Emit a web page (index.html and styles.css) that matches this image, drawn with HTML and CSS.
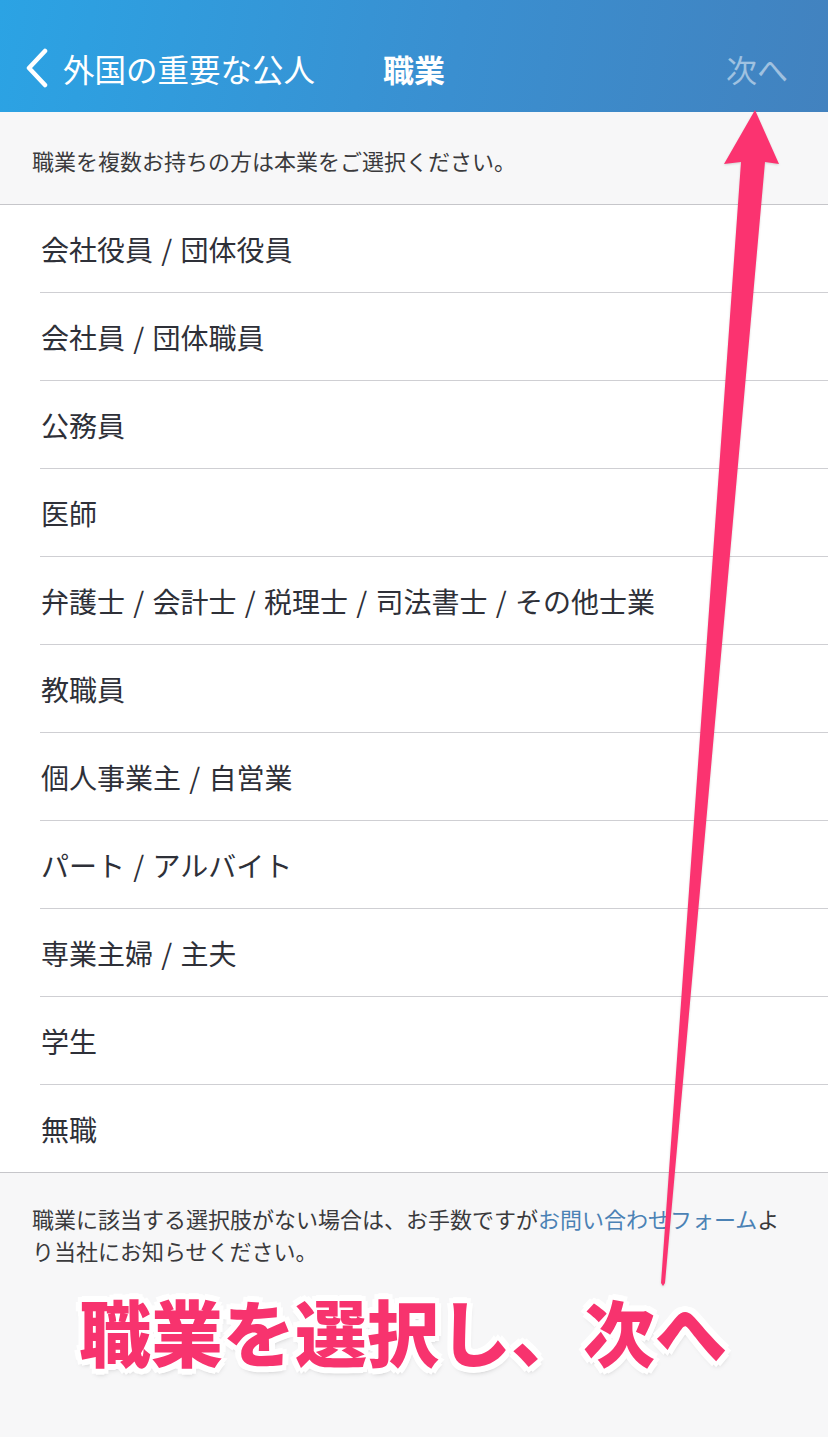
FILE: index.html
```html
<!DOCTYPE html>
<html lang="ja">
<head>
    <meta charset="UTF-8">
    <meta name="viewport" content="width=device-width, initial-scale=1.0">
    <title>職業</title>
    <link rel="stylesheet" href="styles.css">
</head>
<body>

    <div class="page">

        <header class="navbar">
            <div class="nav-back">
                <svg class="chevron" width="26" height="40" viewBox="0 0 26 40">
                    <path d="M21 3 L5 20 L21 37" fill="none" stroke="#fff" stroke-width="4.5" stroke-linecap="round" stroke-linejoin="round"/>
                </svg>
                <span>外国の重要な公人</span>
            </div>
            <div class="nav-title">職業</div>
            <div class="nav-next">次へ</div>
        </header>

        <div class="note">職業を複数お持ちの方は本業をご選択ください。</div>

        <ul class="jobs">
            <li>会社役員 / 団体役員</li>
            <li>会社員 / 団体職員</li>
            <li>公務員</li>
            <li>医師</li>
            <li>弁護士 / 会計士 / 税理士 / 司法書士 / その他士業</li>
            <li>教職員</li>
            <li>個人事業主 / 自営業</li>
            <li>パート / アルバイト</li>
            <li>専業主婦 / 主夫</li>
            <li>学生</li>
            <li>無職</li>
        </ul>

        <div class="footer">
            <p>職業に該当する選択肢がない場合は、お手数ですが<a href="#">お問い合わせフォーム</a>より当社にお知らせください。</p>
            <div class="caption">職業を選択し、次へ</div>
        </div>

        <!-- annotation arrow over the page -->
        <svg class="arrow" width="828" height="1437" viewBox="0 0 828 1437">
            <polygon points="755,110 779,164 765,162 665,1283 663,1286 661,1283 741,162 724,164" fill="#fb3370"/>
        </svg>

    </div>

</body>
</html>
```

FILE: styles.css
```css
* {
    box-sizing: border-box;
}

body {
    margin: 0;
    background-color: #f7f7f8;
    font-family: "Noto Sans CJK JP", "Noto Sans", sans-serif;
}

.page {
    position: relative;
    width: 828px;
    height: 1437px;
    overflow: hidden;
    background-color: #f7f7f8;
}

.navbar {
    display: grid;
    grid-template-columns: 1fr auto 1fr;
    align-items: center;
    height: 112px;
    padding: 24px 0 0 0;
    background: linear-gradient(100deg, #2ba3e4 0%, #3a8fd0 55%, #4282bf 100%);
    color: #fff;
    font-size: 31px;
}

.nav-back {
    display: flex;
    align-items: center;
    gap: 13px;
    padding-left: 24px;
    font-size: 31.5px;
}

.chevron {
    display: block;
}

.nav-title {
    font-weight: bold;
}

.nav-next {
    justify-self: end;
    padding-right: 40px;
    color: rgba(255, 255, 255, 0.5);
}

.note {
    height: 93px;
    padding: 32px 32px 0 32px;
    font-size: 22px;
    color: #3a3a3c;
    border-bottom: 1px solid #c6c6ca;
}

.jobs {
    list-style: none;
    margin: 0;
    padding: 0 0 0 40px;
    background-color: #fff;
    border-bottom: 1px solid #c6c6ca;
}

.jobs li {
    display: flex;
    align-items: center;
    height: 88px;
    padding-left: 1px;
    font-size: 28px;
    word-spacing: 2px;
    color: #2e3038;
    border-bottom: 1px solid #cfcfd3;
}

.jobs li:last-child {
    height: 87px;
    border-bottom: none;
}

.footer {
    padding: 29px 32px 0 32px;
}

.footer p {
    margin: 0;
    font-size: 22px;
    line-height: 32px;
    color: #3a3a3c;
}

.footer a {
    color: #4b82b5;
    text-decoration: none;
}

.caption {
    margin: 20px 0 0 47px;
    font-size: 72px;
    line-height: 88px;
    font-weight: 900;
    color: #f7336e;
    white-space: nowrap;
    text-shadow:
        4px 0 0 #fff, -4px 0 0 #fff, 0 4px 0 #fff, 0 -4px 0 #fff,
        3px 3px 0 #fff, -3px 3px 0 #fff, 3px -3px 0 #fff, -3px -3px 0 #fff,
        6px 0 0 #fff, -6px 0 0 #fff, 0 6px 0 #fff, 0 -6px 0 #fff,
        4px 5px 0 #fff, -4px 5px 0 #fff, 4px -5px 0 #fff, -4px -5px 0 #fff,
        1px 4px 6px rgba(0, 0, 0, 0.4);
}

.arrow {
    position: absolute;
    top: 0;
    left: 0;
    pointer-events: none;
    filter: drop-shadow(0 1px 1px rgba(0, 0, 0, 0.15));
}
```
